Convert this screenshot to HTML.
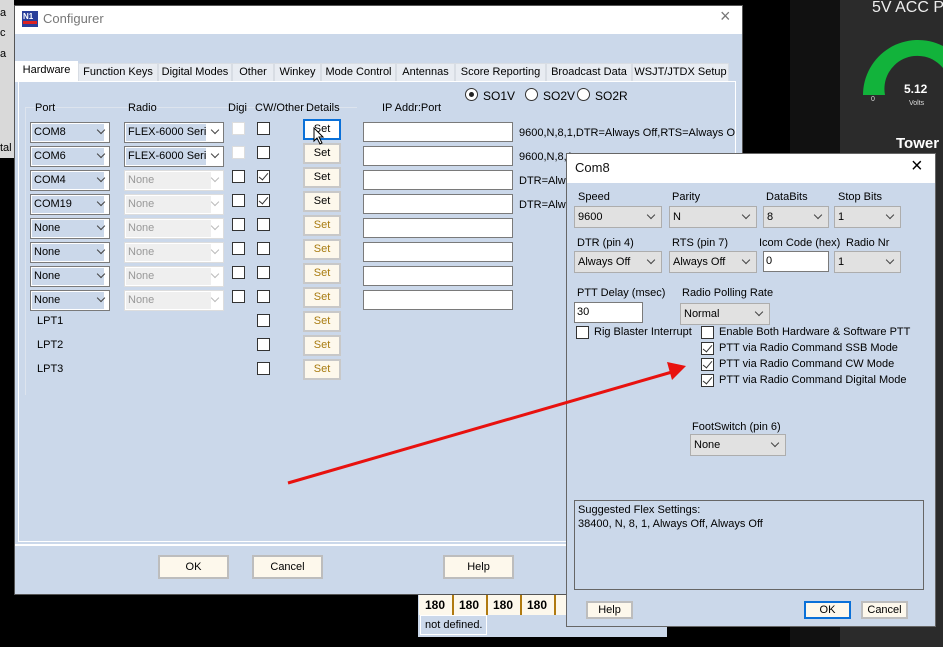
<!DOCTYPE html>
<html><head><meta charset="utf-8"><style>
*{box-sizing:border-box;margin:0;padding:0}
body{width:943px;height:647px;position:relative;overflow:hidden;background:#000;font-family:"Liberation Sans",sans-serif;font-size:11px;color:#000}
.a{position:absolute}
.cmb{position:absolute;height:21px;border:1px solid #7a7a7a;background:#fff;padding:1px}
.cmb span{display:block;height:17px;background:#cbd8ea;line-height:17px;padding-left:2px;width:72px}
.cmb i{position:absolute;right:5px;top:4px;width:6px;height:6px;border-right:1px solid #444;border-bottom:1px solid #444;transform:rotate(45deg)}
.dis{border-color:#ddd}
.dis span{background:#efefef;color:#999;width:85px}
.dis i{border-color:#bbb}
.chk{position:absolute;width:13px;height:13px;border:1px solid #333;background:#fff}
.chk.d{border-color:#ddd}
.chk.c::after{content:"";position:absolute;left:3px;top:0px;width:4px;height:8px;border-right:1.5px solid #333;border-bottom:1.5px solid #333;transform:rotate(40deg)}
.set{position:absolute;width:38px;height:21px;border:2px solid #c8c8c8;background:#fdf8ec;text-align:center;line-height:17px;font-size:11px}
.set.g{color:#a87b10}
.ip{position:absolute;left:363px;width:150px;height:20px;border:1px solid #7a7a7a;background:#fff}
.btn{position:absolute;height:24px;border:2px solid #bdbdbd;background:#fdf8ec;text-align:center;line-height:20px;font-size:11px}
.tab{position:absolute;top:63px;height:18px;background:#e8ecf2;border:1px solid #d8dde4;border-bottom:none;line-height:17px;text-align:center;font-size:11px;white-space:nowrap}
.sel{position:absolute;height:22px;border:1px solid #adadad;background:#e1e1e1;line-height:20px;padding-left:3px}
.sel i{position:absolute;right:7px;top:5px;width:6px;height:6px;border-right:1px solid #444;border-bottom:1px solid #444;transform:rotate(45deg)}
.tx{position:absolute;height:21px;border:1px solid #7a7a7a;background:#fff;line-height:19px;padding-left:2px}
.rad{position:absolute;width:13px;height:13px;border:1px solid #333;border-radius:50%;background:#fff}
.dlg{font-size:11px}
</style></head><body>
<div class="a" style="left:0;top:0;width:14px;height:158px;background:#d9d9d9"></div>
<div class="a" style="left:0;top:7px">a</div>
<div class="a" style="left:0;top:27px">c</div>
<div class="a" style="left:0;top:48px">a</div>
<div class="a" style="left:0;top:142px">tal</div>
<div class="a" style="left:790px;top:0;width:50px;height:647px;background:#111"></div>
<div class="a" style="left:840px;top:0;width:103px;height:647px;background:#2b2b2b;overflow:hidden"><div class="a" style="left:32px;top:-1px;color:#eee;font-size:16px;white-space:nowrap">5V ACC PW</div></div>
<svg class="a" style="left:840px;top:30px" width="103" height="90"><path d="M23 65 A55 55 0 0 1 103 16 L103 38 A33 33 0 0 0 45 65 Z" fill="#12b33b"/></svg>
<div class="a" style="left:904px;top:82px;color:#fff;font-size:12px;font-weight:bold">5.12</div>
<div class="a" style="left:909px;top:100px;color:#ddd;font-size:7px">Volts</div>
<div class="a" style="left:871px;top:96px;color:#ddd;font-size:7px">0</div>
<div class="a" style="left:896px;top:135px;color:#fff;font-size:15px;font-weight:bold">Tower</div>
<div class="a" style="left:418px;top:595px;width:249px;height:42px;background:#cbd8ea"></div>
<div class="a" style="left:419px;top:595px;width:160px;height:20px;background:#fdf8ec;font-weight:bold;font-size:12px;line-height:20px">
<span class="a" style="left:6px">180</span><span class="a" style="left:33px;width:2px;height:20px;background:#b07a10"></span><span class="a" style="left:40px">180</span><span class="a" style="left:67px;width:2px;height:20px;background:#b07a10"></span><span class="a" style="left:74px">180</span><span class="a" style="left:101px;width:2px;height:20px;background:#b07a10"></span><span class="a" style="left:108px">180</span><span class="a" style="left:135px;width:2px;height:20px;background:#b07a10"></span></div>
<div class="a" style="left:420px;top:615px;width:67px;height:20px;border:1px solid #fff;line-height:18px;padding-left:4px">not defined.</div>
<div class="a" style="left:14px;top:5px;width:729px;height:590px;background:#cbd8ea;border:1px solid #555"></div>
<div class="a" style="left:15px;top:6px;width:727px;height:28px;background:#fff"></div>
<svg class="a" style="left:22px;top:11px" width="16" height="16"><rect width="16" height="16" fill="#2a3f9a"/><text x="1" y="8" font-size="8" fill="#fff" font-weight="bold" font-family="Liberation Sans">N1</text><rect x="1" y="10" width="14" height="3" fill="#d22"/></svg>
<div class="a" style="left:43px;top:11px;font-size:13px;color:#777">Configurer</div>
<div class="a" style="left:720px;top:6px;font-size:18px;color:#777">×</div>
<div class="a" style="left:18px;top:81px;width:718px;height:461px;border:1px solid #fff;background:#cbd8ea"></div>
<div class="tab" style="left:15px;top:61px;height:21px;background:#fff;border-color:#fff;width:63px">Hardware</div>
<div class="tab" style="left:78px;width:80px">Function Keys</div>
<div class="tab" style="left:158px;width:74px">Digital Modes</div>
<div class="tab" style="left:232px;width:42px">Other</div>
<div class="tab" style="left:274px;width:47px">Winkey</div>
<div class="tab" style="left:321px;width:75px">Mode Control</div>
<div class="tab" style="left:396px;width:59px">Antennas</div>
<div class="tab" style="left:455px;width:91px">Score Reporting</div>
<div class="tab" style="left:546px;width:86px">Broadcast Data</div>
<div class="tab" style="left:632px;width:97px">WSJT/JTDX Setup</div>
<div class="a" style="left:25px;top:107px;width:332px;height:288px;border:1px solid #dde4ee;border-right:none;border-bottom:none"></div>
<div class="rad" style="left:465px;top:88px"><div class="a" style="left:3px;top:3px;width:5px;height:5px;border-radius:50%;background:#222"></div></div>
<div class="a" style="left:483px;top:89px;font-size:12px">SO1V</div>
<div class="rad" style="left:525px;top:88px"></div><div class="a" style="left:543px;top:89px;font-size:12px">SO2V</div>
<div class="rad" style="left:577px;top:88px"></div><div class="a" style="left:595px;top:89px;font-size:12px">SO2R</div>
<div class="a" style="left:35px;top:102px">Port</div>
<div class="a" style="left:128px;top:102px">Radio</div>
<div class="a" style="left:228px;top:102px">Digi</div>
<div class="a" style="left:255px;top:102px">CW/Other</div>
<div class="a" style="left:306px;top:102px">Details</div>
<div class="a" style="left:382px;top:102px">IP Addr:Port</div>
<div class="cmb" style="left:30px;top:122px;width:80px"><span>COM8</span><i></i></div>
<div class="cmb" style="left:30px;top:146px;width:80px"><span>COM6</span><i></i></div>
<div class="cmb" style="left:30px;top:170px;width:80px"><span>COM4</span><i></i></div>
<div class="cmb" style="left:30px;top:194px;width:80px"><span>COM19</span><i></i></div>
<div class="cmb" style="left:30px;top:218px;width:80px"><span>None</span><i></i></div>
<div class="cmb" style="left:30px;top:242px;width:80px"><span>None</span><i></i></div>
<div class="cmb" style="left:30px;top:266px;width:80px"><span>None</span><i></i></div>
<div class="cmb" style="left:30px;top:290px;width:80px"><span>None</span><i></i></div>
<div class="cmb" style="left:124px;top:122px;width:100px"><span style="width:80px;overflow:hidden;white-space:nowrap">FLEX-6000 Series</span><i></i></div>
<div class="cmb" style="left:124px;top:146px;width:100px"><span style="width:80px;overflow:hidden;white-space:nowrap">FLEX-6000 Series</span><i></i></div>
<div class="cmb dis" style="left:124px;top:170px;width:100px"><span>None</span><i></i></div>
<div class="cmb dis" style="left:124px;top:194px;width:100px"><span>None</span><i></i></div>
<div class="cmb dis" style="left:124px;top:218px;width:100px"><span>None</span><i></i></div>
<div class="cmb dis" style="left:124px;top:242px;width:100px"><span>None</span><i></i></div>
<div class="cmb dis" style="left:124px;top:266px;width:100px"><span>None</span><i></i></div>
<div class="cmb dis" style="left:124px;top:290px;width:100px"><span>None</span><i></i></div>
<div class="chk d" style="left:232px;top:122px"></div><div class="chk" style="left:257px;top:122px"></div>
<div class="chk d" style="left:232px;top:146px"></div><div class="chk" style="left:257px;top:146px"></div>
<div class="chk" style="left:232px;top:170px"></div><div class="chk c" style="left:257px;top:170px"></div>
<div class="chk" style="left:232px;top:194px"></div><div class="chk c" style="left:257px;top:194px"></div>
<div class="chk" style="left:232px;top:218px"></div><div class="chk" style="left:257px;top:218px"></div>
<div class="chk" style="left:232px;top:242px"></div><div class="chk" style="left:257px;top:242px"></div>
<div class="chk" style="left:232px;top:266px"></div><div class="chk" style="left:257px;top:266px"></div>
<div class="chk" style="left:232px;top:290px"></div><div class="chk" style="left:257px;top:290px"></div>
<div class="chk" style="left:257px;top:314px"></div>
<div class="chk" style="left:257px;top:338px"></div>
<div class="chk" style="left:257px;top:362px"></div>
<div class="a" style="left:37px;top:315px">LPT1</div>
<div class="a" style="left:37px;top:339px">LPT2</div>
<div class="a" style="left:37px;top:363px">LPT3</div>
<div class="set" style="left:303px;top:119px;border-color:#0a70d8;background:#fff">Set</div>
<div class="set" style="left:303px;top:143px">Set</div>
<div class="set" style="left:303px;top:167px">Set</div>
<div class="set" style="left:303px;top:191px">Set</div>
<div class="set g" style="left:303px;top:215px">Set</div>
<div class="set g" style="left:303px;top:239px">Set</div>
<div class="set g" style="left:303px;top:263px">Set</div>
<div class="set g" style="left:303px;top:287px">Set</div>
<div class="set g" style="left:303px;top:311px">Set</div>
<div class="set g" style="left:303px;top:335px">Set</div>
<div class="set g" style="left:303px;top:359px">Set</div>
<svg class="a" style="left:313px;top:127px" width="12" height="18"><path d="M1 1 L1 14 L4 11 L7 17 L9 16 L6 10 L10 10 Z" fill="#fff" stroke="#000"/></svg>
<div class="ip" style="top:122px"></div><div class="ip" style="top:146px"></div><div class="ip" style="top:170px"></div><div class="ip" style="top:194px"></div><div class="ip" style="top:218px"></div><div class="ip" style="top:242px"></div><div class="ip" style="top:266px"></div><div class="ip" style="top:290px"></div>
<div class="a" style="left:519px;top:127px;white-space:nowrap;width:216px;overflow:hidden">9600,N,8,1,DTR=Always Off,RTS=Always On</div>
<div class="a" style="left:519px;top:151px;white-space:nowrap">9600,N,8,1</div>
<div class="a" style="left:519px;top:175px;white-space:nowrap">DTR=Alw</div>
<div class="a" style="left:519px;top:199px;white-space:nowrap">DTR=Alw</div>
<div class="a" style="left:15px;top:544px;width:727px;height:2px;background:#fff"></div>
<div class="btn" style="left:158px;top:555px;width:71px">OK</div>
<div class="btn" style="left:252px;top:555px;width:71px">Cancel</div>
<div class="btn" style="left:443px;top:555px;width:71px">Help</div>
<div class="dlg">
<div class="a" style="left:566px;top:153px;width:370px;height:474px;background:#cbd8ea;border:1px solid #666"></div>
<div class="a" style="left:567px;top:154px;width:368px;height:29px;background:#fff"></div>
<div class="a" style="left:575px;top:160px;font-size:13px;color:#111">Com8</div>
<div class="a" style="left:911px;top:155px;font-size:20px">×</div>
<div class="a" style="left:578px;top:191px">Speed</div>
<div class="a" style="left:672px;top:191px">Parity</div>
<div class="a" style="left:766px;top:191px">DataBits</div>
<div class="a" style="left:838px;top:191px">Stop Bits</div>
<div class="sel" style="left:574px;top:206px;width:88px">9600<i></i></div>
<div class="sel" style="left:669px;top:206px;width:88px">N<i></i></div>
<div class="sel" style="left:763px;top:206px;width:66px">8<i></i></div>
<div class="sel" style="left:834px;top:206px;width:67px">1<i></i></div>
<div class="a" style="left:577px;top:237px">DTR (pin 4)</div>
<div class="a" style="left:672px;top:237px">RTS (pin 7)</div>
<div class="a" style="left:759px;top:237px">Icom Code (hex)</div>
<div class="a" style="left:846px;top:237px">Radio Nr</div>
<div class="sel" style="left:574px;top:251px;width:88px">Always Off<i></i></div>
<div class="sel" style="left:669px;top:251px;width:88px">Always Off<i></i></div>
<div class="tx" style="left:763px;top:251px;width:66px">0</div>
<div class="sel" style="left:834px;top:251px;width:67px">1<i></i></div>
<div class="a" style="left:577px;top:287px">PTT Delay  (msec)</div>
<div class="a" style="left:682px;top:287px">Radio Polling Rate</div>
<div class="tx" style="left:574px;top:302px;width:69px">30</div>
<div class="sel" style="left:680px;top:303px;width:90px">Normal<i></i></div>
<div class="chk" style="left:576px;top:326px"></div><div class="a" style="left:594px;top:326px">Rig Blaster Interrupt</div>
<div class="chk" style="left:701px;top:326px"></div><div class="a" style="left:719px;top:326px">Enable Both Hardware &amp; Software PTT</div>
<div class="chk c" style="left:701px;top:342px"></div><div class="a" style="left:719px;top:342px">PTT via Radio Command SSB Mode</div>
<div class="chk c" style="left:701px;top:358px"></div><div class="a" style="left:719px;top:358px">PTT via Radio Command CW Mode</div>
<div class="chk c" style="left:701px;top:374px"></div><div class="a" style="left:719px;top:374px">PTT via Radio Command Digital Mode</div>
<div class="a" style="left:692px;top:421px">FootSwitch (pin 6)</div>
<div class="sel" style="left:690px;top:434px;width:96px">None<i></i></div>
<div class="a" style="left:574px;top:500px;width:350px;height:90px;border:1px solid #666;padding:2px 3px;line-height:14px;font-size:11px">Suggested Flex Settings:<br>38400, N, 8, 1, Always Off, Always Off</div>
<div class="btn" style="left:586px;top:601px;width:47px;height:18px;line-height:14px">Help</div>
<div class="btn" style="left:804px;top:601px;width:47px;height:18px;line-height:14px;border-color:#0a70d8">OK</div>
<div class="btn" style="left:861px;top:601px;width:47px;height:18px;line-height:14px">Cancel</div>
</div>
<svg class="a" style="left:0;top:0" width="943" height="647"><line x1="288" y1="483" x2="672" y2="372" stroke="#e8120f" stroke-width="3"/><path d="M686 366 L667 362 L672 380 Z" fill="#e8120f"/></svg>
</body></html>
